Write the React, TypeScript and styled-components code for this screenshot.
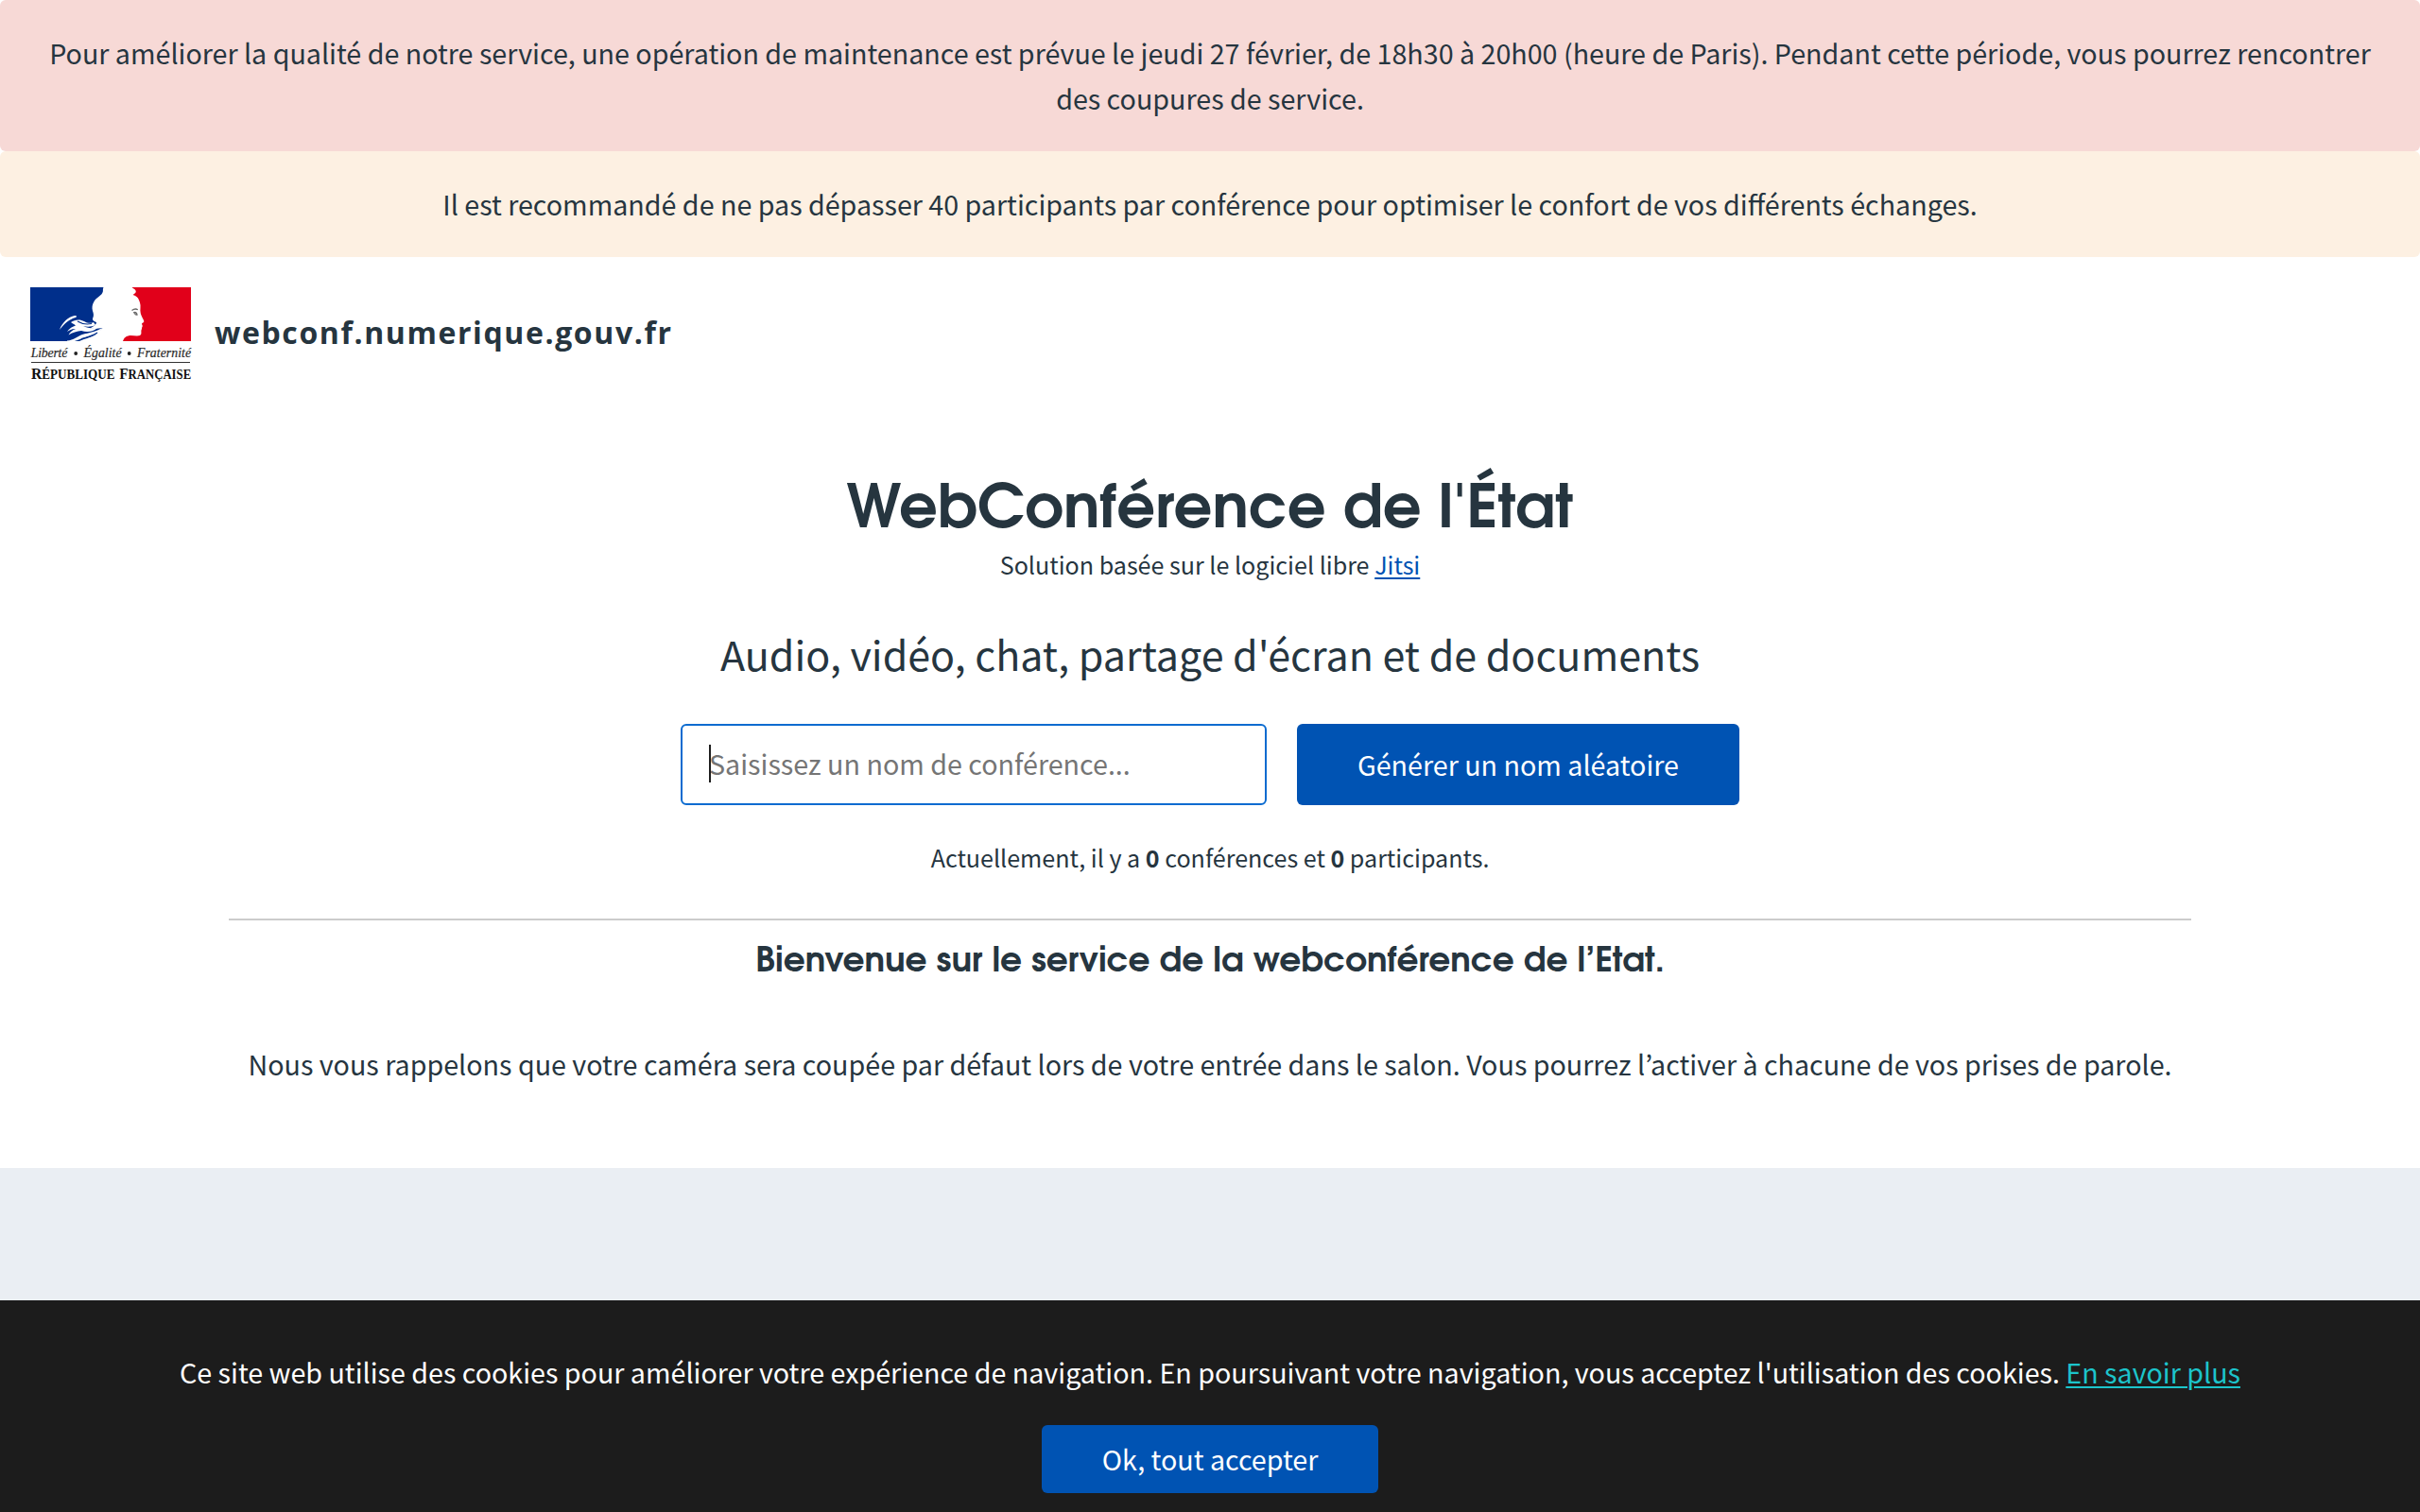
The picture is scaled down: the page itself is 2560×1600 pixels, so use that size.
import React from "react";
import styled, { createGlobalStyle } from "styled-components";

const ink = "#26353f";
const blue = "#0053b3";
const sans = `"Noto Sans CJK KR", "Open Sans", sans-serif`;
const display = `"TeX Gyre Adventor", Inter, sans-serif`;

const GlobalStyle = createGlobalStyle`
  *, *::before, *::after { box-sizing: border-box; }
  html, body { margin: 0; }
  body {
    background: #fff;
    color: ${ink};
    font: 400 28.66px/48px ${sans};
    overflow: hidden;
  }
`;

const Page = styled.div`
  display: flex;
  flex-direction: column;
  height: 1600px;
  background: #eaeef3;
`;

const Alerts = styled.div`
  background: #fff;
`;

const Alert = styled.div<{ $tone: "danger" | "warning" }>`
  padding: 32px 48px;
  border-radius: 6px;
  text-align: center;
  background: ${(p) => (p.$tone === "danger" ? "#f7d9d6" : "#fdf0e2")};
`;

const Header = styled.header`
  display: flex;
  align-items: flex-start;
  gap: 24px;
  height: 160px;
  padding: 32px;
  background: #fff;
`;

const Logo = styled.svg`
  display: block;
  flex: none;
  width: 171px;
  height: 100px;
  overflow: visible;
`;

const SiteName = styled.div`
  padding-top: 24px;
  font: 700 32px/48px "Open Sans", sans-serif;
  letter-spacing: 1.6px;
`;

const Main = styled.main`
  display: flex;
  flex-direction: column;
  align-items: center;
  height: 804px;
  padding-top: 74px;
  background: #fff;
  text-align: center;
`;

const Title = styled.h1`
  margin: 0;
  font: 700 64px/70px ${display};
`;

const Small = styled.p<{ $top?: number }>`
  margin: ${(p) => p.$top ?? 0}px 0 0;
  font-size: 25.08px;
  line-height: 42px;
`;

const Link = styled.a<{ $color: string }>`
  color: ${(p) => p.$color};
  text-decoration: underline;
  text-decoration-thickness: 2px;
  text-underline-offset: 3px;
`;

const Tagline = styled.p`
  margin: 37px 0 0;
  font-size: 42.98px;
  line-height: 72px;
`;

const Form = styled.form`
  display: flex;
  gap: 32px;
  margin-top: 39px;
`;

const Field = styled.label`
  position: relative;
  display: block;
  width: 620px;
  height: 86px;
`;

const Input = styled.input`
  display: block;
  width: 100%;
  height: 100%;
  padding: 0 30px 3px 28px;
  border: 2px solid #0b6bd0;
  border-radius: 6px;
  outline: 0;
  background: #fff;
  color: ${ink};
  font: 400 28.66px/48px ${sans};
  &::placeholder {
    color: #757575;
    opacity: 1;
  }
`;

const Caret = styled.span`
  position: absolute;
  left: 30px;
  top: 22px;
  width: 2px;
  height: 40px;
  background: #1e1e1e;
`;

const Button = styled.button<{ $w: number; $h: number }>`
  width: ${(p) => p.$w}px;
  height: ${(p) => p.$h}px;
  padding: 0 0 1px;
  border: 0;
  border-radius: 6px;
  background: ${blue};
  color: #fff;
  font: 400 28.66px/48px ${sans};
`;

const Rule = styled.hr`
  width: 2076px;
  height: 2px;
  margin: 44px 0 0;
  border: 0;
  background: #cccccc;
`;

const Welcome = styled.h2`
  margin: 14px 0 0;
  font: 700 36px/60px ${display};
  letter-spacing: -0.05px;
`;

const Notice = styled.p`
  margin: 54px 0 0;
`;

const CookieBar = styled.aside`
  position: fixed;
  inset: auto 0 0;
  display: flex;
  flex-direction: column;
  align-items: center;
  gap: 32px;
  height: 224px;
  padding-top: 52px;
  background: #1c1c1c;
  color: #fff;
`;

const CookieText = styled.p`
  margin: 0;
`;

const Motto = styled.text`
  font: italic 400 13.8px "Liberation Serif", serif;
  fill: #2b2b2b;
  stroke: #2b2b2b;
  stroke-width: 0.2px;
`;

const Capitals = styled.text`
  font: 700 16.5px "Liberation Serif", serif;
  fill: #111;
`;

function RepubliqueLogo() {
  return (
    <Logo viewBox="0 0 171 100" role="img">
      <rect width="86" height="57" fill="#002f8b" />
      <rect x="84" width="86" height="57" fill="#e1001a" />
      {/* hair, forehead, nose, mouth and neck */}
      <path
        fill="#fff"
        d="M77.5 0 C76.2 2.5 77.8 4 76 6.500 C74.5 9 70 11 67.5 15 C65.5 18 65 22 66 25 C67 28 67.5 30 66 33 C65.5 35.5 68 36 70 37 C70 40 66 42 63 43.5 L68 44 L76.5 43 L70 49 C67 53 64 55.5 60 57 L98 57 C99.5 53 101 52 105 51 C109 50.5 114 52.5 116.5 50.5 C118.5 49 116.5 46.5 118 44 C117.5 42.5 119.5 41.5 118.5 40 C117.5 38.5 118 38 120 37 C121 36 119.5 34 118.5 32 C117 29 116 26 116.5 22 C117 18 115.5 14 114 11.5 C112.5 9.5 110.5 8.5 108.5 8 C110.5 6.5 112.5 5.5 111.5 3.5 C111 1.5 109 2 107.5 0 Z"
      />
      {/* ribbons behind the neck */}
      <g fill="#fff">
        <path d="M31 45 C34 37 40 31.5 47 30 C49.5 29.5 49.5 31.5 48 32 C41 34 36 38.5 31 45 Z" />
        <path d="M43 37 C47 34 53 33.5 57 36 C60 38 64 38.5 67 37 L69 40 C65 42 60 42 56 41 C60 43 66 44 71 43 C67 47 60 48 54 46 C50 46.5 44 48 40.5 50.5 C42 47.5 45 45 48 44 C44.5 43.5 41.5 45.5 39 47 C41 43.5 45 41.5 48 40.5 C46 38.5 44 38 43 37 Z" />
        <path d="M39 56.5 C46 56 50 52 55 50 C62 48 70 47 76 43 C73 49 66 51 60 52.5 C53 54.5 50 56 47 57 L39 57 Z" />
        <path d="M52 57 C58 54 66 53 73 48 L66 57 Z" />
      </g>
      <path
        fill="none"
        stroke="#002f8b"
        strokeWidth="1.2"
        d="M50 36 C54 38.5 60 39.5 65 38.5 M54 54.5 C60 53 66 51.5 71 48"
      />
      {/* eye */}
      <path
        fill="none"
        stroke="#6b6b6b"
        strokeWidth="1.3"
        d="M107.5 24.5 C109.5 23 112 22.7 113.8 23.7 M109 27 C111 26 112.5 26.5 113 29 C111.5 29.3 110.8 28.6 110.5 27.3"
      />
      <Motto x="0.8" y="73.6" textLength="38.5">
        Liberté
      </Motto>
      <circle cx="48.2" cy="70" r="1.9" fill="#222" />
      <Motto x="56.5" y="73.6" textLength="40">
        Égalité
      </Motto>
      <circle cx="104.7" cy="70" r="1.9" fill="#222" />
      <Motto x="113" y="73.6" textLength="57">
        Fraternité
      </Motto>
      <rect x="1" y="79" width="168" height="1" fill="#333" />
      <Capitals x="1" y="97" textLength="88.500" lengthAdjust="spacingAndGlyphs">
        R<tspan fontSize="13.8">ÉPUBLIQUE</tspan>
      </Capitals>
      <Capitals x="94.2" y="97" textLength="76" lengthAdjust="spacingAndGlyphs">
        F<tspan fontSize="13.8">RANÇAISE</tspan>
      </Capitals>
    </Logo>
  );
}

export default function App() {
  return (
    <Page>
      <GlobalStyle />
      <Alerts>
        <Alert $tone="danger">
          Pour améliorer la qualité de notre service, une opération de maintenance est prévue le
          jeudi 27 février, de 18h30 à 20h00 (heure de Paris). Pendant cette période, vous pourrez
          rencontrer des coupures de service.
        </Alert>
        <Alert $tone="warning">
          Il est recommandé de ne pas dépasser 40 participants par conférence pour optimiser le
          confort de vos différents échanges.
        </Alert>
      </Alerts>
      <Header>
        <RepubliqueLogo />
        <SiteName>webconf.numerique.gouv.fr</SiteName>
      </Header>
      <Main>
        <Title>WebConférence de l'État</Title>
        <Small>
          Solution basée sur le logiciel libre{" "}
          <Link $color={blue} href="#">
            Jitsi
          </Link>
        </Small>
        <Tagline>Audio, vidéo, chat, partage d'écran et de documents</Tagline>
        <Form>
          <Field>
            <Input placeholder="Saisissez un nom de conférence..." />
            <Caret />
          </Field>
          <Button type="button" $w={468} $h={86}>
            Générer un nom aléatoire
          </Button>
        </Form>
        <Small $top={34}>
          Actuellement, il y a <b>0</b> conférences et <b>0</b> participants.
        </Small>
        <Rule />
        <Welcome>Bienvenue sur le service de la webconférence de l’Etat.</Welcome>
        <Notice>
          Nous vous rappelons que votre caméra sera coupée par défaut lors de votre entrée dans le
          salon. Vous pourrez l’activer à chacune de vos prises de parole.
        </Notice>
      </Main>
      <CookieBar>
        <CookieText>
          Ce site web utilise des cookies pour améliorer votre expérience de navigation. En
          poursuivant votre navigation, vous acceptez l'utilisation des cookies.{" "}
          <Link $color="#1cc4cb" href="#">
            En savoir plus
          </Link>
        </CookieText>
        <Button type="button" $w={356} $h={72}>
          Ok, tout accepter
        </Button>
      </CookieBar>
    </Page>
  );
}
